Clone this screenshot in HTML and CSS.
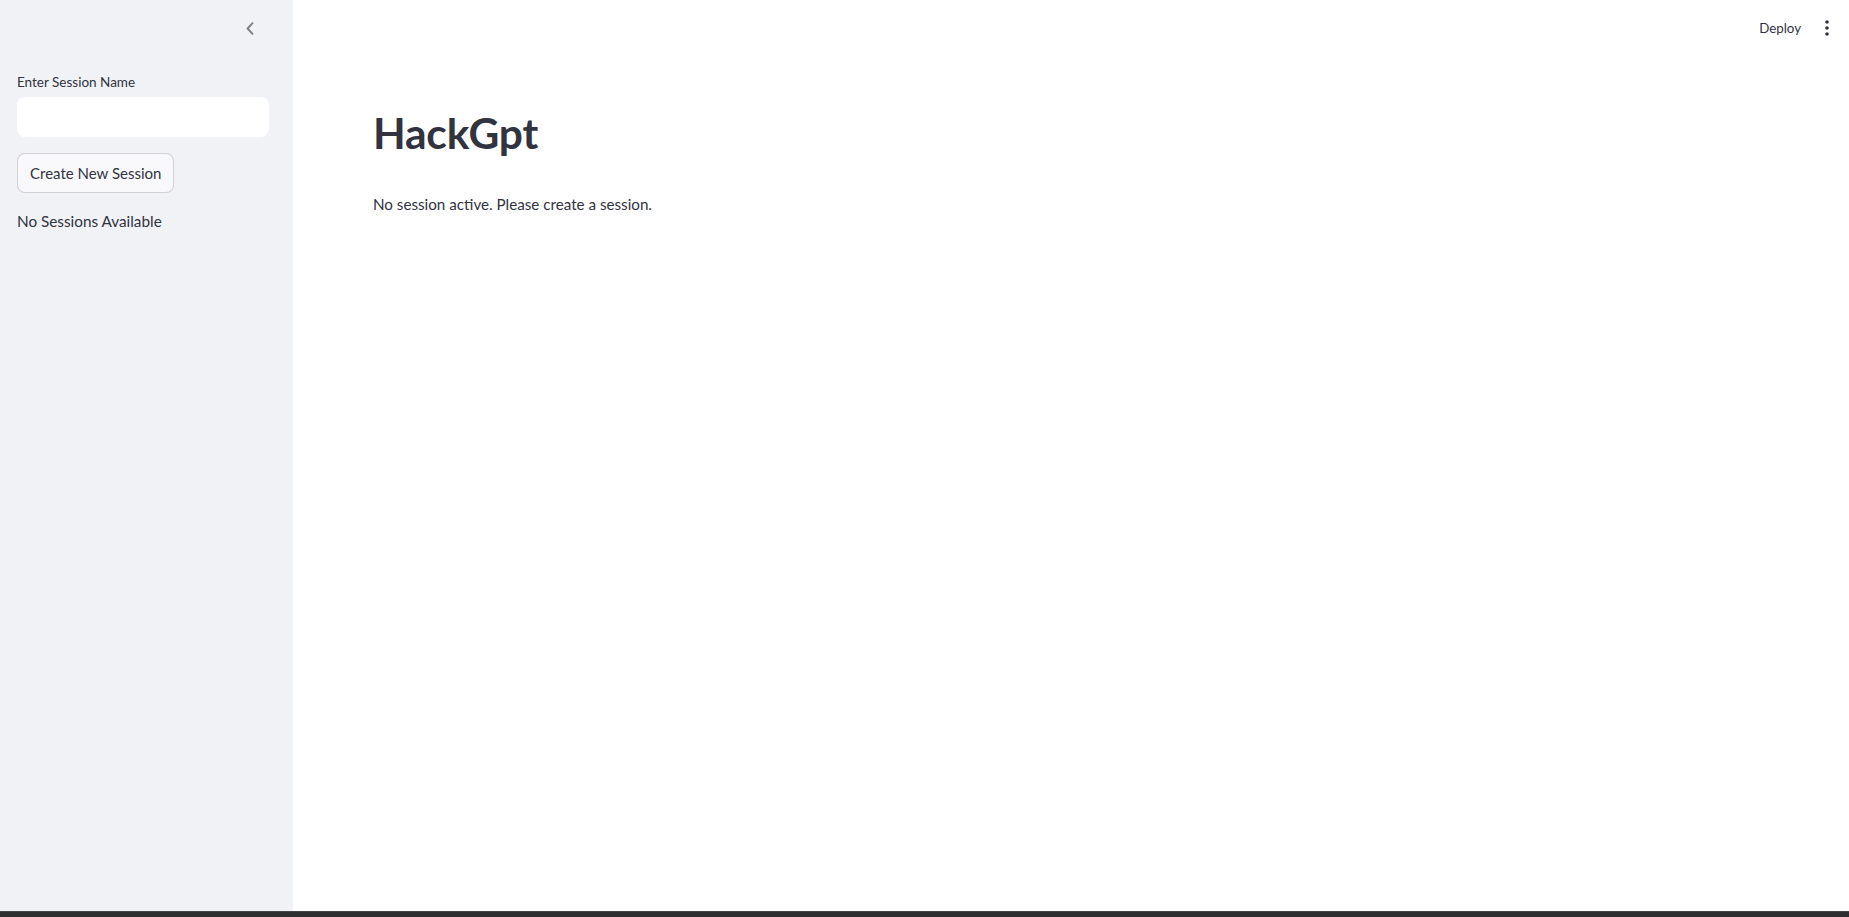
FILE: index.html
```html
<!DOCTYPE html>
<html lang="en">
<head>
<meta charset="utf-8">
<title>HackGpt</title>
<link rel="stylesheet" href="styles.css">
</head>
<body>
<div class="app">
  <aside class="sidebar">
    <div class="sidebar-header">
      <button class="collapse-btn" aria-label="Close sidebar">
        <svg width="8" height="13" viewBox="0 0 8 13"><path d="M6.5 1.2 L1.6 6.5 L6.5 11.8" fill="none" stroke="#7d7f88" stroke-width="1.9" stroke-linecap="round" stroke-linejoin="round"/></svg>
      </button>
    </div>
    <div class="sidebar-content">
      <label class="field-label" for="session">Enter Session Name</label>
      <input id="session" class="text-input" type="text">
      <button class="secondary-btn">Create New Session</button>
      <p class="sidebar-text">No Sessions Available</p>
    </div>
  </aside>
  <main class="main">
    <header class="header">
      <span class="deploy">Deploy</span>
      <button class="menu-btn" aria-label="Main menu">
        <svg width="4" height="16" viewBox="0 0 4 16"><circle cx="2" cy="2" r="1.8" fill="#31333f"/><circle cx="2" cy="8" r="1.8" fill="#31333f"/><circle cx="2" cy="14" r="1.8" fill="#31333f"/></svg>
      </button>
    </header>
    <section class="block">
      <h1 class="title">HackGpt</h1>
      <p class="body-text">No session active. Please create a session.</p>
    </section>
  </main>
</div>
<div class="taskbar"></div>
</body>
</html>
```

FILE: styles.css
```css
* { box-sizing: border-box; }
html, body { margin: 0; padding: 0; height: 100%; }
body {
  font-family: Lato, "Liberation Sans", sans-serif;
  color: #31333f;
  background: #ffffff;
  display: flex;
  flex-direction: column;
  overflow: hidden;
}
.app {
  display: flex;
  height: 911px;
}
.sidebar {
  width: 293px;
  flex: 0 0 293px;
  background: #f0f2f6;
  display: flex;
  flex-direction: column;
}
.sidebar-header {
  height: 56px;
  display: flex;
  justify-content: flex-end;
  align-items: center;
  padding-right: 38px;
}
.collapse-btn {
  border: none;
  background: transparent;
  padding: 0;
  width: 10px;
  height: 14px;
  display: flex;
  align-items: center;
  justify-content: center;
}
.sidebar-content {
  padding: 15px 24px 0 17px;
  display: flex;
  flex-direction: column;
  align-items: flex-start;
}
.field-label {
  font-size: 13.5px;
  line-height: 22px;
  margin-bottom: 4px;
}
.text-input {
  width: 100%;
  height: 40px;
  border: none;
  border-radius: 8px;
  background: #ffffff;
  outline: none;
}
.secondary-btn {
  margin-top: 16px;
  height: 40px;
  padding: 0 12px;
  font-family: inherit;
  font-size: 15px;
  color: #31333f;
  background: #f9f9fb;
  border: 1px solid rgba(49, 51, 63, 0.2);
  border-radius: 8px;
}
.sidebar-text {
  margin: 15px 0 0;
  font-size: 15.3px;
  line-height: 26px;
}
.main {
  flex: 1;
  display: flex;
  flex-direction: column;
}
.header {
  height: 56px;
  display: flex;
  justify-content: flex-end;
  align-items: center;
  padding-right: 20px;
  gap: 24px;
}
.deploy {
  font-size: 13.3px;
}
.menu-btn {
  border: none;
  background: transparent;
  padding: 0;
  display: flex;
}
.block {
  padding: 50px 80px 0;
}
.title {
  margin: 0;
  font-size: 42.5px;
  font-weight: 700;
  line-height: 54px;
  letter-spacing: -0.2px;
}
.body-text {
  margin: 32px 0 0;
  font-size: 15.2px;
  line-height: 24px;
}
.taskbar {
  height: 6px;
  background: #2e2e31;
  border-top: 1px solid #444447;
}
```
